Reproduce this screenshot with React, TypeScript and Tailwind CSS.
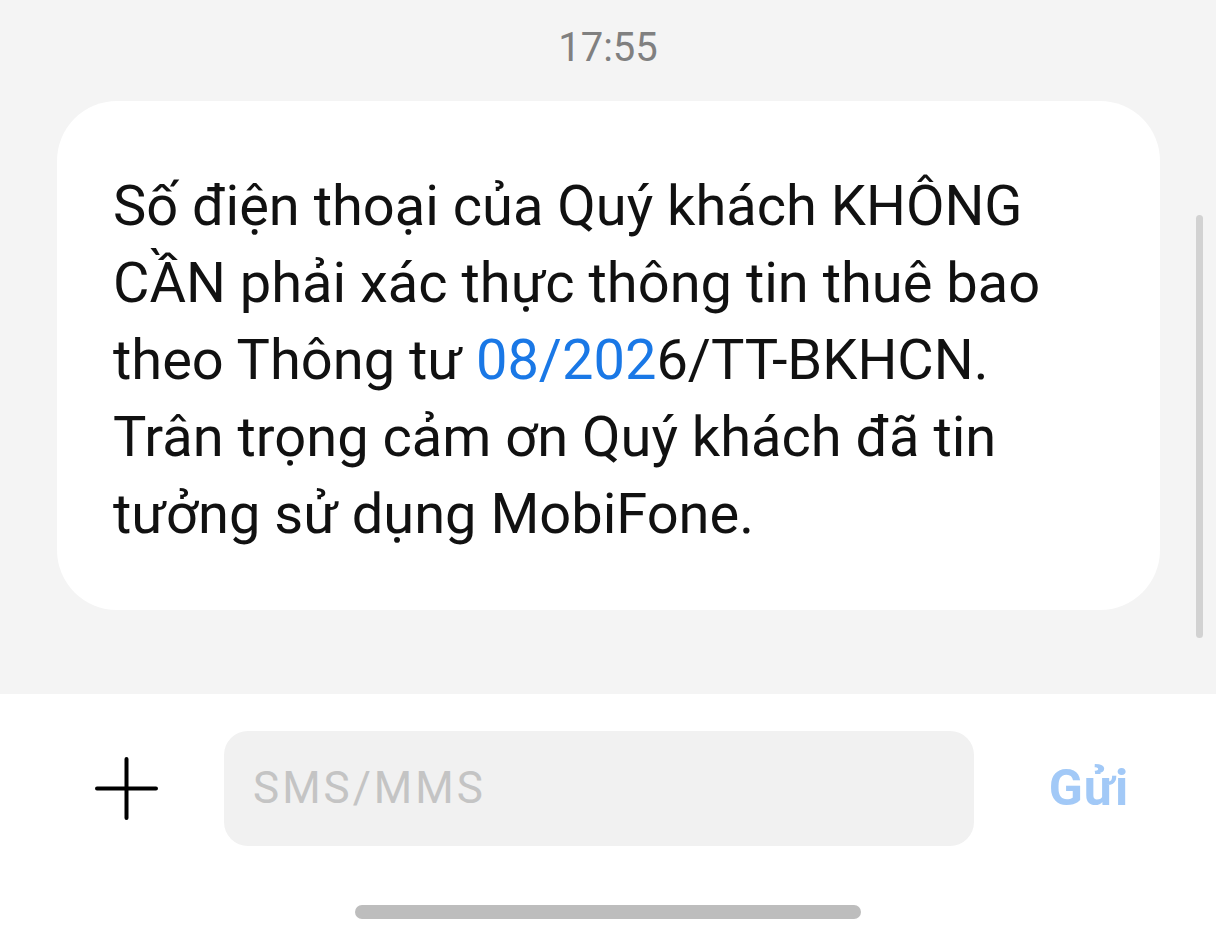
import React from "react"

const font = { fontFamily: "Roboto, 'Noto Sans', sans-serif" }

const lines: React.ReactNode[] = [
    "Số điện thoại của Quý khách KHÔNG",
    "CẦN phải xác thực thông tin thuê bao",
    <>
        theo Thông tư <span className="text-[#1a78e6]">08/202</span>6/TT-BKHCN.
    </>,
    "Trân trọng cảm ơn Quý khách đã tin",
    "tưởng sử dụng MobiFone.",
]

const App: React.FC = () => {
    return (
        <div className="w-[1216px] h-[944px] flex flex-col bg-white overflow-hidden" style={font}>
            {/* CONVERSATION */}
            <div className="relative h-[694px] bg-[#f4f4f4] flex flex-col items-center">
                <div className="pt-[26px] h-[101px] text-[40px] leading-[44px] text-[#808080]">
                    17:55
                </div>
                <div className="
                    w-[1103px]
                    h-[509px]
                    ml-[1px]
                    rounded-[60px]
                    bg-white
                    pl-[56px]
                    pt-[67px]
                ">
                    <div className="text-[56px] leading-[77px] text-[#111]">
                        {lines.map((l, i) => (
                            <div key={i} className="whitespace-nowrap">{l}</div>
                        ))}
                    </div>
                </div>
                {/* scrollbar */}
                <div className="absolute right-[13px] top-[215px] w-[7px] h-[423px] rounded-full bg-[#d2d2d2]" />
            </div>

            {/* INPUT BAR */}
            <div className="flex items-center h-[194px] pb-[6px]">
                <div className="w-[224px] flex justify-center pl-[28px]">
                    <svg width="63" height="63" viewBox="0 0 63 63">
                        <path d="M31.5 2v59M2 31.5h59" stroke="#000" strokeWidth="4" strokeLinecap="round" />
                    </svg>
                </div>
                <div className="w-[750px] h-[115px] rounded-[24px] bg-[#f1f1f1] flex items-center pl-[29px]">
                    <span className="text-[44px] tracking-[3px] text-[#c4c4c4]">SMS/MMS</span>
                </div>
                <div className="flex-1 flex justify-center pr-[12px]">
                    <span className="text-[50px] tracking-[1px] font-bold text-[#a2c9f7]">Gửi</span>
                </div>
            </div>

            {/* HOME INDICATOR */}
            <div className="flex justify-center pt-[17px]">
                <div className="w-[506px] h-[14px] rounded-full bg-[#bdbdbd]" />
            </div>
        </div>
    )
}

export default App
